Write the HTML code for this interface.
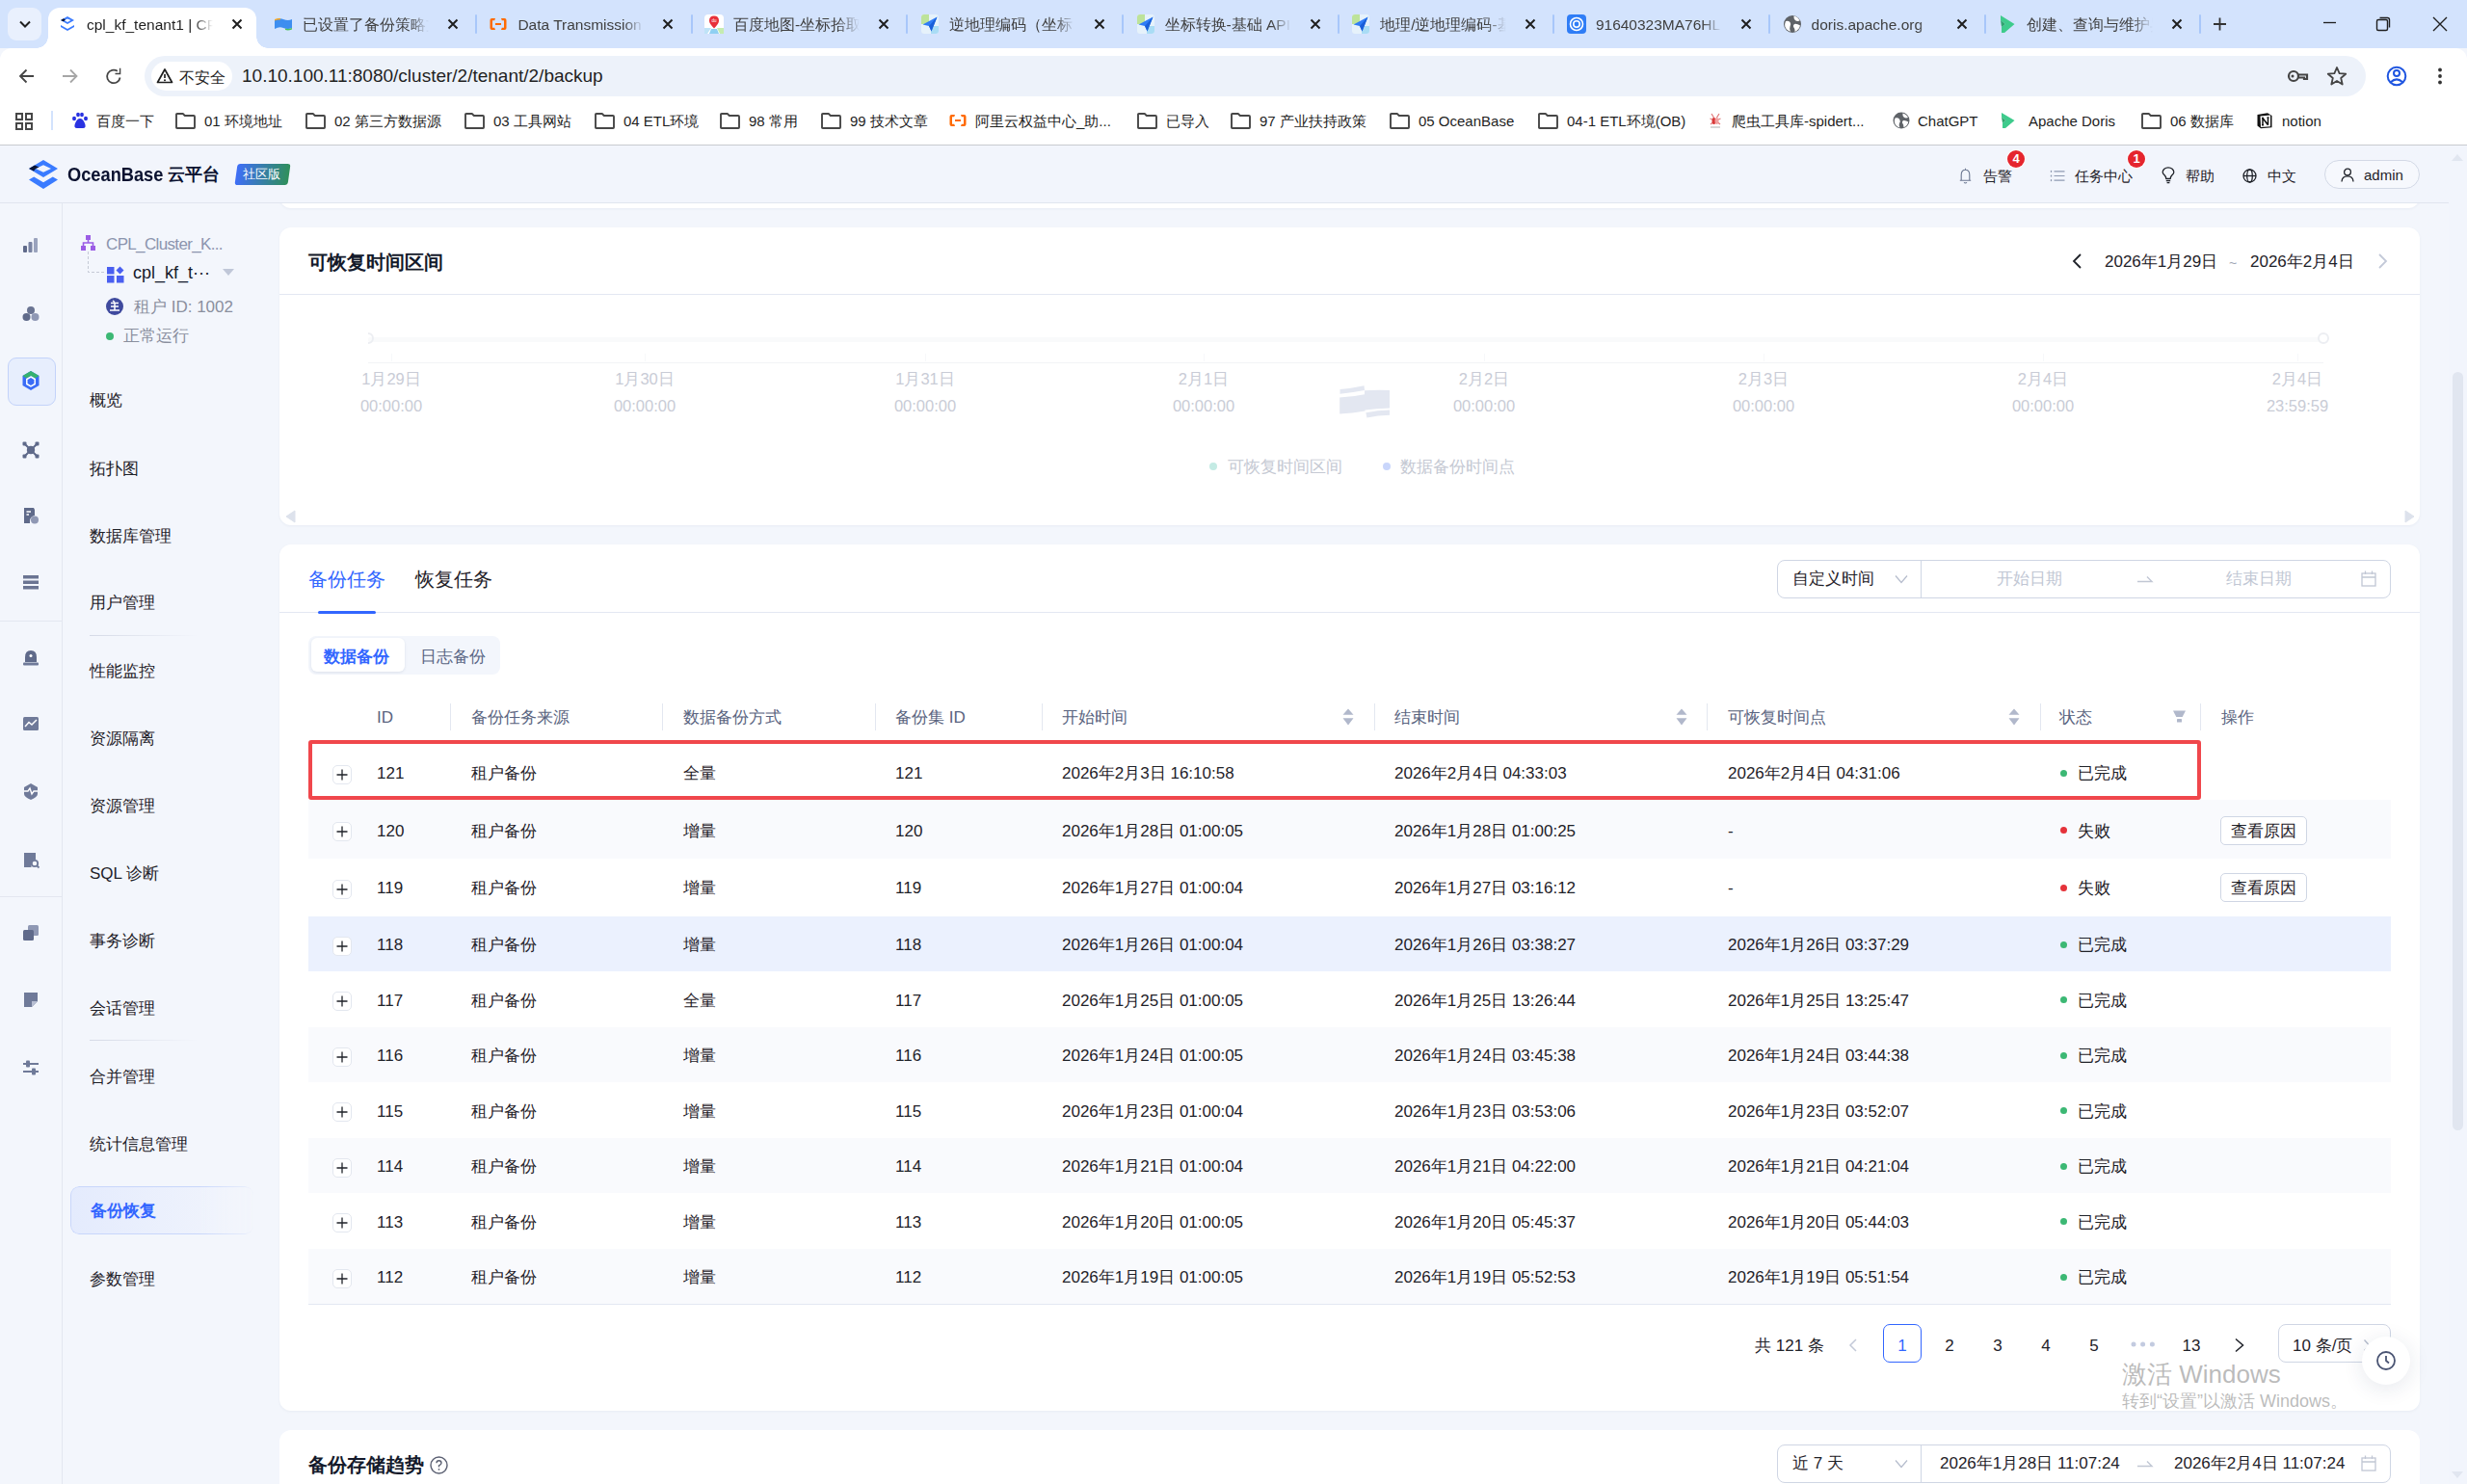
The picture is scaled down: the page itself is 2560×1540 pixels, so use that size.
<!DOCTYPE html><html><head><meta charset="utf-8"><style>
*{box-sizing:border-box;margin:0;padding:0}
html,body{width:2560px;height:1540px;overflow:hidden;background:#f3f6fc;font-family:"Liberation Sans",sans-serif;color:#1f1f1f;position:relative}
.a{position:absolute}
.t{position:absolute;white-space:nowrap;line-height:24px}
svg.i{position:absolute;overflow:visible}
.tab{position:absolute;top:8px;height:42px;width:224px}
.tab .fav{position:absolute;left:10px;top:7px;width:20px;height:20px}
.tab .ttl{position:absolute;left:40px;top:1px;width:131px;height:34px;overflow:hidden;font-size:15.5px;line-height:34px;color:#1f1f1f;white-space:nowrap;-webkit-mask-image:linear-gradient(to right,#000 84%,transparent)}
.tab .cls{position:absolute;left:186px;top:7px;width:20px;height:20px}
.sep{position:absolute;top:15px;width:2px;height:20px;background:#a8c7fa;border-radius:1px}
.bm{position:absolute;top:114px;height:24px;font-size:15px;line-height:24px;white-space:nowrap;color:#1f1f1f}
.mi{position:absolute;left:93px;font-size:17px;line-height:24px;color:#1f2229;white-space:nowrap}
.card{position:absolute;left:226px;width:2221px;background:#fff;border-radius:12px;box-shadow:0 1px 4px rgba(30,50,90,.05)}
.th{position:absolute;font-size:17px;line-height:24px;color:#5a6480;white-space:nowrap}
.td{position:absolute;font-size:17px;line-height:24px;color:#1f2229;white-space:nowrap}
.xl{position:absolute;color:#c9ccd6;font-size:16.5px;line-height:22px;white-space:nowrap;text-align:center;width:140px}
</style></head><body>
<div class="a" style="left:0;top:0;width:2560px;height:50px;background:#d3e3fd"></div>
<div class="a" style="left:8px;top:8px;width:35px;height:34px;border-radius:9px;background:#e9f0fd"></div>
<svg class="i" style="left:19px;top:19px" width="14" height="12" viewBox="0 0 14 12"><path d="M2 3.5 L7 8.5 L12 3.5" fill="none" stroke="#1f1f1f" stroke-width="2"/></svg>
<div class="a" style="left:50px;top:8px;width:216px;height:42px;background:#fff;border-radius:12px 12px 0 0"></div>
<div class="a" style="left:38px;top:38px;width:12px;height:12px;background:radial-gradient(circle at 0 0,transparent 11.5px,#fff 12px)"></div>
<div class="a" style="left:266px;top:38px;width:12px;height:12px;background:radial-gradient(circle at 100% 0,transparent 11.5px,#fff 12px)"></div>
<div class="tab" style="left:50.0px"><svg class="fav" viewBox="0 0 20 20"><path d="M10 2 L17 6 L10 10 L3 6 Z M10 4.5 L6.5 6 L10 8 L13.5 6 Z" fill="#3a7bff" fill-rule="evenodd"/><path d="M3 6 L6 4.3 L8 5.6 L5.8 7.2 Z" fill="#0b1533"/><path d="M3 11 L10 15 L17 11 L17 13 L10 17 L3 13 Z" fill="#3a7bff"/></svg><div class="ttl">cpl_kf_tenant1 | CP</div><svg class="cls" viewBox="0 0 20 20"><path d="M5.5 5.5 L14.5 14.5 M14.5 5.5 L5.5 14.5" stroke="#1f1f1f" stroke-width="2"/></svg></div>
<div class="tab" style="left:273.7px"><svg class="fav" viewBox="0 0 20 20"><path d="M1 6 Q6 3 10 5 Q15 7 19 5 L19 14 Q15 16 10 14 Q6 12 1 15 Z" fill="#3d8ef0"/><path d="M1 5 Q4 3.5 7 4 L7 5.5 Q4 5 1 6.5 Z" fill="#f5a623"/><path d="M12 14.5 Q15 15.5 19 14 L19 15.5 Q15 17 12 16 Z" fill="#4cc35b"/></svg><div class="ttl" style="color:#3f3f3f">已设置了备份策略文</div><svg class="cls" viewBox="0 0 20 20"><path d="M5.5 5.5 L14.5 14.5 M14.5 5.5 L5.5 14.5" stroke="#1f1f1f" stroke-width="2"/></svg></div>
<div class="sep" style="left:492.9px"></div>
<div class="tab" style="left:497.4px"><svg class="fav" viewBox="0 0 20 20"><path d="M7 4 H3.5 Q1.5 4 1.5 6 V14 Q1.5 16 3.5 16 H7 L6.2 13.8 H4 V6.2 H6.2 Z M13 4 H16.5 Q18.5 4 18.5 6 V14 Q18.5 16 16.5 16 H13 L13.8 13.8 H16 V6.2 H13.8 Z" fill="#ff6a00"/><rect x="7" y="9" width="6" height="2" fill="#ff6a00"/></svg><div class="ttl" style="color:#3f3f3f">Data Transmission</div><svg class="cls" viewBox="0 0 20 20"><path d="M5.5 5.5 L14.5 14.5 M14.5 5.5 L5.5 14.5" stroke="#1f1f1f" stroke-width="2"/></svg></div>
<div class="sep" style="left:716.6px"></div>
<div class="tab" style="left:721.1px"><svg class="fav" viewBox="0 0 20 20"><rect x="0" y="0" width="20" height="20" rx="4" fill="#fff"/><path d="M0 14 L7 14 L3 20 L0 20Z" fill="#bfe3f7"/><path d="M7 15 L13 15 L15 20 L5 20Z" fill="#8fd0f2"/><path d="M13 14 L20 14 L20 20 L16 20Z" fill="#c5ecb0"/><path d="M10 1.5 Q15 1.5 15 6.5 Q15 9.5 10 14.5 Q5 9.5 5 6.5 Q5 1.5 10 1.5Z" fill="#e8303a"/><text x="10" y="8.2" font-size="4.5" fill="#fff" text-anchor="middle" font-family="Liberation Sans">du</text></svg><div class="ttl" style="color:#3f3f3f">百度地图-坐标拾取器</div><svg class="cls" viewBox="0 0 20 20"><path d="M5.5 5.5 L14.5 14.5 M14.5 5.5 L5.5 14.5" stroke="#1f1f1f" stroke-width="2"/></svg></div>
<div class="sep" style="left:940.3px"></div>
<div class="tab" style="left:944.8px"><svg class="fav" viewBox="0 0 18 20"><rect x="0" y="0" width="18" height="20" rx="3" fill="#e6f2fb"/><path d="M0 3 Q0 0 3 0 L8 0 L8 10 L0 10Z" fill="#bde39a"/><path d="M10 12 L18 12 L18 17 Q18 20 15 20 L10 20Z" fill="#a9dcf5"/><path d="M1.5 10.5 L16.5 2.5 L10.5 17.5 L8 12 Z" fill="#2f7cf6"/><path d="M8 12 L16.5 2.5 L10.5 17.5Z" fill="#1a5fd8"/></svg><div class="ttl" style="color:#3f3f3f">逆地理编码（坐标 - 文</div><svg class="cls" viewBox="0 0 20 20"><path d="M5.5 5.5 L14.5 14.5 M14.5 5.5 L5.5 14.5" stroke="#1f1f1f" stroke-width="2"/></svg></div>
<div class="sep" style="left:1164.0px"></div>
<div class="tab" style="left:1168.5px"><svg class="fav" viewBox="0 0 18 20"><rect x="0" y="0" width="18" height="20" rx="3" fill="#e6f2fb"/><path d="M0 3 Q0 0 3 0 L8 0 L8 10 L0 10Z" fill="#bde39a"/><path d="M10 12 L18 12 L18 17 Q18 20 15 20 L10 20Z" fill="#a9dcf5"/><path d="M1.5 10.5 L16.5 2.5 L10.5 17.5 L8 12 Z" fill="#2f7cf6"/><path d="M8 12 L16.5 2.5 L10.5 17.5Z" fill="#1a5fd8"/></svg><div class="ttl" style="color:#3f3f3f">坐标转换-基础 API 文</div><svg class="cls" viewBox="0 0 20 20"><path d="M5.5 5.5 L14.5 14.5 M14.5 5.5 L5.5 14.5" stroke="#1f1f1f" stroke-width="2"/></svg></div>
<div class="sep" style="left:1387.7px"></div>
<div class="tab" style="left:1392.2px"><svg class="fav" viewBox="0 0 18 20"><rect x="0" y="0" width="18" height="20" rx="3" fill="#e6f2fb"/><path d="M0 3 Q0 0 3 0 L8 0 L8 10 L0 10Z" fill="#bde39a"/><path d="M10 12 L18 12 L18 17 Q18 20 15 20 L10 20Z" fill="#a9dcf5"/><path d="M1.5 10.5 L16.5 2.5 L10.5 17.5 L8 12 Z" fill="#2f7cf6"/><path d="M8 12 L16.5 2.5 L10.5 17.5Z" fill="#1a5fd8"/></svg><div class="ttl" style="color:#3f3f3f">地理/逆地理编码-基</div><svg class="cls" viewBox="0 0 20 20"><path d="M5.5 5.5 L14.5 14.5 M14.5 5.5 L5.5 14.5" stroke="#1f1f1f" stroke-width="2"/></svg></div>
<div class="sep" style="left:1611.4px"></div>
<div class="tab" style="left:1615.9px"><svg class="fav" viewBox="0 0 20 20"><rect x="0" y="0" width="20" height="20" rx="4" fill="#2f7df6"/><circle cx="10" cy="10" r="6.5" fill="none" stroke="#fff" stroke-width="1.6"/><circle cx="10" cy="10" r="3.2" fill="none" stroke="#fff" stroke-width="1.6"/></svg><div class="ttl" style="color:#3f3f3f">91640323MA76HL</div><svg class="cls" viewBox="0 0 20 20"><path d="M5.5 5.5 L14.5 14.5 M14.5 5.5 L5.5 14.5" stroke="#1f1f1f" stroke-width="2"/></svg></div>
<div class="sep" style="left:1835.1px"></div>
<div class="tab" style="left:1839.6px"><svg class="fav" viewBox="0 0 20 20"><circle cx="10" cy="10" r="9" fill="#5f6368"/><path d="M3 7 Q5.5 6 7.5 8 Q9 10 7.5 12.7 Q6.5 15 8 17.8 Q4 16.8 2.3 12.5 Q1.8 9.6 3 7Z M11.5 1.5 Q16 2.7 17.6 6.5 Q15 7.6 12.8 6 Q11 4.4 11.5 1.5Z M12 10 Q14.8 9.4 18 11.6 Q17 16 12.6 17.9 Q12.6 14.3 11 12.7 Q10.5 11 12 10Z" fill="#fff"/></svg><div class="ttl" style="color:#3f3f3f">doris.apache.org</div><svg class="cls" viewBox="0 0 20 20"><path d="M5.5 5.5 L14.5 14.5 M14.5 5.5 L5.5 14.5" stroke="#1f1f1f" stroke-width="2"/></svg></div>
<div class="sep" style="left:2058.8px"></div>
<div class="tab" style="left:2063.3px"><svg class="fav" viewBox="0 0 20 20"><path d="M3 1 L17.5 10 L7 19 L4 19 L4 13 L8 10 L3 6 Z" fill="#3ecb8c"/><path d="M3 6 L8 10 L4 13Z" fill="#2fa56f"/></svg><div class="ttl" style="color:#3f3f3f">创建、查询与维护异</div><svg class="cls" viewBox="0 0 20 20"><path d="M5.5 5.5 L14.5 14.5 M14.5 5.5 L5.5 14.5" stroke="#1f1f1f" stroke-width="2"/></svg></div>
<svg class="i" style="left:2293px;top:15px" width="20" height="20" viewBox="0 0 20 20"><path d="M10.5 3.5 V16.5 M4 10 H17" stroke="#333" stroke-width="1.8"/></svg>
<div class="sep" style="left:2282px"></div>
<svg class="i" style="left:2408px;top:14px" width="20" height="20" viewBox="0 0 20 20"><path d="M3 9.5 H16" stroke="#1f1f1f" stroke-width="1.3"/></svg>
<svg class="i" style="left:2463px;top:15px" width="20" height="20" viewBox="0 0 20 20"><rect x="3.5" y="5.5" width="11" height="11" rx="1.5" fill="none" stroke="#1f1f1f" stroke-width="1.4"/><path d="M6.5 3.5 H14.5 Q16.5 3.5 16.5 5.5 V13.5" fill="none" stroke="#1f1f1f" stroke-width="1.4"/></svg>
<svg class="i" style="left:2522px;top:15px" width="20" height="20" viewBox="0 0 20 20"><path d="M3 3 L17 17 M17 3 L3 17" stroke="#1f1f1f" stroke-width="1.4"/></svg>
<div class="a" style="left:0;top:50px;width:2560px;height:100px;background:#fff;border-radius:12px 12px 0 0"></div>
<svg class="i" style="left:18px;top:68.5px" width="20" height="20" viewBox="0 0 20 20"><path d="M17 10 H3 M9.5 3.5 L3 10 L9.5 16.5" fill="none" stroke="#454545" stroke-width="1.8"/></svg>
<svg class="i" style="left:63px;top:68.5px" width="20" height="20" viewBox="0 0 20 20"><path d="M2 10 H16.5 M10 3.5 L16.5 10 L10 16.5" fill="none" stroke="#a6a6a6" stroke-width="1.8"/></svg>
<svg class="i" style="left:108px;top:68.5px" width="20" height="20" viewBox="0 0 20 20"><path d="M16.6 11.5 A6.8 6.8 0 1 1 13.8 4.8" fill="none" stroke="#454545" stroke-width="1.8"/><path d="M17.3 1.8 V8.2 H11.5 V6.8 H15.9 V1.8Z" fill="#454545"/></svg>
<div class="a" style="left:150px;top:58px;width:2305px;height:42px;border-radius:21px;background:#edf2fa"></div>
<div class="a" style="left:157px;top:64px;width:84px;height:30px;border-radius:15px;background:#fff"></div>
<svg class="i" style="left:162px;top:70px" width="18" height="18" viewBox="0 0 18 18"><path d="M9 2 L16.5 15.5 H1.5 Z" fill="none" stroke="#1f1f1f" stroke-width="1.7" stroke-linejoin="round"/><path d="M9 7 V11" stroke="#1f1f1f" stroke-width="1.7"/><circle cx="9" cy="13.2" r="1" fill="#1f1f1f"/></svg>
<div class="t" style="left:186px;top:69px;font-size:15.5px;line-height:24px;color:#1f1f1f">不安全</div>
<div class="t" style="left:251px;top:66px;font-size:19px;line-height:26px;color:#1f1f1f">10.10.100.11:8080/cluster/2/tenant/2/backup</div>
<svg class="i" style="left:2373px;top:69px" width="24" height="20" viewBox="0 0 24 20"><circle cx="7" cy="10" r="5" fill="none" stroke="#444" stroke-width="2.2"/><circle cx="6" cy="10" r="1.5" fill="#444"/><path d="M12 8.5 H21 V13 H18 V11.5 H12" fill="none" stroke="#444" stroke-width="2.2"/></svg>
<svg class="i" style="left:2414px;top:68px" width="22" height="22" viewBox="0 0 22 22"><path d="M11 2 L13.6 8.2 L20.2 8.7 L15.2 13 L16.7 19.5 L11 16 L5.3 19.5 L6.8 13 L1.8 8.7 L8.4 8.2 Z" fill="none" stroke="#444" stroke-width="1.8" stroke-linejoin="round"/></svg>
<svg class="i" style="left:2476px;top:68px" width="22" height="22" viewBox="0 0 22 22"><circle cx="11" cy="11" r="9.3" fill="none" stroke="#1f55e0" stroke-width="2"/><circle cx="11" cy="8" r="3" fill="none" stroke="#1f55e0" stroke-width="2"/><path d="M4.8 17.2 Q11 11.5 17.2 17.2" fill="none" stroke="#1f55e0" stroke-width="2"/></svg>
<svg class="i" style="left:2527px;top:69px" width="10" height="20" viewBox="0 0 10 20"><circle cx="5" cy="3.5" r="1.9" fill="#333"/><circle cx="5" cy="10" r="1.9" fill="#333"/><circle cx="5" cy="16.5" r="1.9" fill="#333"/></svg>
<svg class="i" style="left:16px;top:117px" width="18" height="18" viewBox="0 0 18 18"><rect x="1" y="1" width="6" height="6" fill="none" stroke="#474747" stroke-width="2"/><rect x="11" y="1" width="6" height="6" fill="none" stroke="#474747" stroke-width="2"/><rect x="1" y="11" width="6" height="6" fill="none" stroke="#474747" stroke-width="2"/><rect x="11" y="11" width="6" height="6" fill="none" stroke="#474747" stroke-width="2"/></svg>
<div class="a" style="left:53px;top:115px;width:2px;height:20px;background:#d3e3fd"></div>
<svg class="i" style="left:74px;top:116px" width="18" height="18" viewBox="0 0 18 18"><ellipse cx="3" cy="7" rx="2" ry="2.3" fill="#2932e1"/><ellipse cx="7" cy="3" rx="1.9" ry="2.3" fill="#2932e1"/><ellipse cx="11" cy="3" rx="1.9" ry="2.3" fill="#2932e1"/><ellipse cx="15" cy="7" rx="2" ry="2.3" fill="#2932e1"/><path d="M9 7 Q12 7 14 12 Q16 17 12 17 H6 Q2 17 4 12 Q6 7 9 7Z" fill="#2932e1"/></svg>
<div class="bm" style="left:100px">百度一下</div>
<svg class="i" style="left:182px;top:117px" width="21" height="17" viewBox="0 0 21 17"><path d="M1 1.8 Q1 1 1.8 1 H7.8 L9.8 3 H19 Q20 3 20 4 V15.2 Q20 16 19.2 16 H1.8 Q1 16 1 15.2 Z" fill="none" stroke="#474747" stroke-width="1.9" stroke-linejoin="round"/></svg>
<div class="bm" style="left:212px">01 环境地址</div>
<svg class="i" style="left:317px;top:117px" width="21" height="17" viewBox="0 0 21 17"><path d="M1 1.8 Q1 1 1.8 1 H7.8 L9.8 3 H19 Q20 3 20 4 V15.2 Q20 16 19.2 16 H1.8 Q1 16 1 15.2 Z" fill="none" stroke="#474747" stroke-width="1.9" stroke-linejoin="round"/></svg>
<div class="bm" style="left:347px">02 第三方数据源</div>
<svg class="i" style="left:482px;top:117px" width="21" height="17" viewBox="0 0 21 17"><path d="M1 1.8 Q1 1 1.8 1 H7.8 L9.8 3 H19 Q20 3 20 4 V15.2 Q20 16 19.2 16 H1.8 Q1 16 1 15.2 Z" fill="none" stroke="#474747" stroke-width="1.9" stroke-linejoin="round"/></svg>
<div class="bm" style="left:512px">03 工具网站</div>
<svg class="i" style="left:617px;top:117px" width="21" height="17" viewBox="0 0 21 17"><path d="M1 1.8 Q1 1 1.8 1 H7.8 L9.8 3 H19 Q20 3 20 4 V15.2 Q20 16 19.2 16 H1.8 Q1 16 1 15.2 Z" fill="none" stroke="#474747" stroke-width="1.9" stroke-linejoin="round"/></svg>
<div class="bm" style="left:647px">04 ETL环境</div>
<svg class="i" style="left:747px;top:117px" width="21" height="17" viewBox="0 0 21 17"><path d="M1 1.8 Q1 1 1.8 1 H7.8 L9.8 3 H19 Q20 3 20 4 V15.2 Q20 16 19.2 16 H1.8 Q1 16 1 15.2 Z" fill="none" stroke="#474747" stroke-width="1.9" stroke-linejoin="round"/></svg>
<div class="bm" style="left:777px">98 常用</div>
<svg class="i" style="left:852px;top:117px" width="21" height="17" viewBox="0 0 21 17"><path d="M1 1.8 Q1 1 1.8 1 H7.8 L9.8 3 H19 Q20 3 20 4 V15.2 Q20 16 19.2 16 H1.8 Q1 16 1 15.2 Z" fill="none" stroke="#474747" stroke-width="1.9" stroke-linejoin="round"/></svg>
<div class="bm" style="left:882px">99 技术文章</div>
<svg class="i" style="left:984px;top:115px" width="20" height="20" viewBox="0 0 20 20"><path d="M7 4 H3.5 Q1.5 4 1.5 6 V14 Q1.5 16 3.5 16 H7 L6.2 13.8 H4 V6.2 H6.2 Z M13 4 H16.5 Q18.5 4 18.5 6 V14 Q18.5 16 16.5 16 H13 L13.8 13.8 H16 V6.2 H13.8 Z" fill="#ff6a00"/><rect x="7" y="9" width="6" height="2" fill="#ff6a00"/></svg>
<div class="bm" style="left:1012px">阿里云权益中心_助...</div>
<svg class="i" style="left:1180px;top:117px" width="21" height="17" viewBox="0 0 21 17"><path d="M1 1.8 Q1 1 1.8 1 H7.8 L9.8 3 H19 Q20 3 20 4 V15.2 Q20 16 19.2 16 H1.8 Q1 16 1 15.2 Z" fill="none" stroke="#474747" stroke-width="1.9" stroke-linejoin="round"/></svg>
<div class="bm" style="left:1210px">已导入</div>
<svg class="i" style="left:1277px;top:117px" width="21" height="17" viewBox="0 0 21 17"><path d="M1 1.8 Q1 1 1.8 1 H7.8 L9.8 3 H19 Q20 3 20 4 V15.2 Q20 16 19.2 16 H1.8 Q1 16 1 15.2 Z" fill="none" stroke="#474747" stroke-width="1.9" stroke-linejoin="round"/></svg>
<div class="bm" style="left:1307px">97 产业扶持政策</div>
<svg class="i" style="left:1442px;top:117px" width="21" height="17" viewBox="0 0 21 17"><path d="M1 1.8 Q1 1 1.8 1 H7.8 L9.8 3 H19 Q20 3 20 4 V15.2 Q20 16 19.2 16 H1.8 Q1 16 1 15.2 Z" fill="none" stroke="#474747" stroke-width="1.9" stroke-linejoin="round"/></svg>
<div class="bm" style="left:1472px">05 OceanBase</div>
<svg class="i" style="left:1596px;top:117px" width="21" height="17" viewBox="0 0 21 17"><path d="M1 1.8 Q1 1 1.8 1 H7.8 L9.8 3 H19 Q20 3 20 4 V15.2 Q20 16 19.2 16 H1.8 Q1 16 1 15.2 Z" fill="none" stroke="#474747" stroke-width="1.9" stroke-linejoin="round"/></svg>
<div class="bm" style="left:1626px">04-1 ETL环境(OB)</div>
<svg class="i" style="left:1773px;top:116px" width="14" height="18" viewBox="0 0 14 18"><path d="M3 2 L5.5 6 M11 2 L8.5 6 M1.5 7 L5 8.5 M12.5 7 L9 8.5 M2 13 L5 10.5 M12 13 L9 10.5" stroke="#e07a7a" stroke-width="1.2"/><ellipse cx="5.5" cy="9.5" rx="2" ry="3.5" fill="#d93838"/><ellipse cx="8.5" cy="9.5" rx="2" ry="3.5" fill="#f0a0a0"/><path d="M2 16 H12" stroke="#999" stroke-width="0.8"/></svg>
<div class="bm" style="left:1797px">爬虫工具库-spidert...</div>
<svg class="i" style="left:1964px;top:116px" width="18" height="18" viewBox="0 0 18 18"><circle cx="9" cy="9" r="8.5" fill="#5f6368"/><path d="M2.5 6.5 Q5 5.5 7 7.5 Q8.5 9.5 7 12 Q6 14 7.5 16.5 Q3.5 15.5 2 11.5 Q1.5 9 2.5 6.5Z M10.5 1.5 Q14.5 2.5 16 6 Q13.5 7 11.5 5.5 Q10 4 10.5 1.5Z M11 9 Q13.5 8.5 16.3 10.5 Q15.5 14.5 11.5 16.3 Q11.5 13 10 11.5 Q9.5 10 11 9Z" fill="#fff"/></svg>
<div class="bm" style="left:1990px">ChatGPT</div>
<svg class="i" style="left:2076px;top:116px" width="15" height="18" viewBox="0 0 15 18"><path d="M1 1 L14.5 9 L5 17 L2 17 L2 11.5 L5.5 9 L1 5.5 Z" fill="#3ecb8c"/><path d="M1 5.5 L5.5 9 L2 11.5Z" fill="#2fa56f"/></svg>
<div class="bm" style="left:2105px">Apache Doris</div>
<svg class="i" style="left:2222px;top:117px" width="21" height="17" viewBox="0 0 21 17"><path d="M1 1.8 Q1 1 1.8 1 H7.8 L9.8 3 H19 Q20 3 20 4 V15.2 Q20 16 19.2 16 H1.8 Q1 16 1 15.2 Z" fill="none" stroke="#474747" stroke-width="1.9" stroke-linejoin="round"/></svg>
<div class="bm" style="left:2252px">06 数据库</div>
<svg class="i" style="left:2341px;top:116px" width="18" height="18" viewBox="0 0 18 18"><path d="M1.5 3 L12 1.2 L16.5 4 V16.3 L5 17.3 L1.5 14.5Z" fill="#111"/><path d="M4.5 4.6 L15 3.6 V15.2 L5 16 Z" fill="#fff"/><path d="M7 6.5 V13.8 M7 6.5 L12.5 13.8 M12.5 6 V13.8 M6 6.5 H8 M11.5 6 H13.5 M6 13.8 H8" stroke="#111" stroke-width="1.5"/></svg>
<div class="bm" style="left:2368px">notion</div>
<div class="a" style="left:0;top:150px;width:2560px;height:1px;background:#c8cbd0"></div>
<div class="a" style="left:290px;top:196px;width:2221px;height:20px;background:#fff;border-radius:0 0 12px 12px;box-shadow:0 1px 3px rgba(30,50,90,.05)"></div>
<div class="a" style="left:0;top:151px;width:2541px;height:60px;background:#f2f5fc;border-bottom:1px solid #e0e5ef"></div>
<div class="a" style="left:2541px;top:151px;width:19px;height:1389px;background:#f2f5fc"></div>
<div class="a" style="left:2545px;top:386px;width:11px;height:787px;border-radius:6px;background:#e1e6f0"></div>
<svg class="i" style="left:2543px;top:158px" width="14" height="10" viewBox="0 0 14 10"><path d="M1 9 L7 2 L13 9Z" fill="#e1e6f0"/></svg>
<svg class="i" style="left:2543px;top:1526px" width="14" height="10" viewBox="0 0 14 10"><path d="M1 1 L7 8 L13 1Z" fill="#e1e6f0"/></svg>
<svg class="i" style="left:29px;top:165px" width="32" height="32" viewBox="0 0 32 32"><path d="M16 1 L31 10 L16 19 L1 10 Z M16 6.3 L24 10 L16 13.7 L8 10 Z" fill="#3a7bff" fill-rule="evenodd"/><path d="M1 10 L7 6.4 L11.5 8.6 L8 10 L6 12.4 Z" fill="#0b1533"/><path d="M1 21.5 L6.2 18.5 L16 24.3 L25.8 18.5 L31 21.5 L16 31 Z" fill="#3a7bff"/></svg>
<div class="t" style="left:70px;top:168.5px;font-size:20.5px;font-weight:bold;color:#0b1230;transform:scaleX(.89);transform-origin:0 50%">OceanBase</div>
<div class="t" style="left:174px;top:169px;font-size:18px;font-weight:bold;color:#0b1230">云平台</div>
<div class="a" style="left:245px;top:170px;width:55px;height:22px;transform:skewX(-8deg);border-radius:3px;background:linear-gradient(90deg,#3f6ef7,#2f8f5a)"></div>
<div class="t" style="left:252px;top:169px;font-size:13px;line-height:24px;color:#fff">社区版</div>
<svg class="i" style="left:2033px;top:174px" width="13" height="17" viewBox="0 0 13 17"><path d="M2.2 13 V7.5 Q2.2 2.3 6.5 2.3 Q10.8 2.3 10.8 7.5 V13 M0.8 13.3 H12.2 M6.5 0.8 V2.3 M5 15.3 Q6.5 16.6 8 15.3" fill="none" stroke="#6a7690" stroke-width="1.1"/></svg>
<div class="t" style="left:2058px;top:170.5px;font-size:15px;color:#1f2229">告警</div>
<div class="a" style="left:2083px;top:156px;width:18px;height:18px;border-radius:9px;background:#e5252e;color:#fff;font-size:13px;font-weight:bold;line-height:18px;text-align:center;box-shadow:0 0 0 1px #fff">4</div>
<svg class="i" style="left:2127px;top:176px" width="16" height="13" viewBox="0 0 16 13"><path d="M1.5 1.5 V2.3 M1.5 6.1 V6.9 M1.5 10.7 V11.5" stroke="#8f9ab2" stroke-width="1.4" stroke-linecap="round"/><path d="M4.5 1.9 H15.5 M4.5 6.5 H15.5 M4.5 11.1 H15.5" stroke="#8f9ab2" stroke-width="1.1"/></svg>
<div class="t" style="left:2153px;top:170.5px;font-size:15px;color:#1f2229">任务中心</div>
<div class="a" style="left:2208px;top:156px;width:18px;height:18px;border-radius:9px;background:#e5252e;color:#fff;font-size:13px;font-weight:bold;line-height:18px;text-align:center;box-shadow:0 0 0 1px #fff">1</div>
<svg class="i" style="left:2243px;top:174px" width="14" height="17" viewBox="0 0 14 17"><path d="M4.8 11.5 Q4.8 9.5 3.3 8 Q1.2 6 1.2 4.8 A5.8 5 0 0 1 12.8 4.8 Q12.8 6 10.7 8 Q9.2 9.5 9.2 11.5 Z" fill="none" stroke="#1f2229" stroke-width="1.3" stroke-linejoin="round"/><path d="M4.8 13.6 H9.2 M5.6 15.6 H8.4" stroke="#1f2229" stroke-width="1.3"/></svg>
<div class="t" style="left:2268px;top:170.5px;font-size:15px;color:#1f2229">帮助</div>
<svg class="i" style="left:2327px;top:175px" width="15" height="15" viewBox="0 0 15 15"><circle cx="7.5" cy="7.5" r="6.5" fill="none" stroke="#1f2229" stroke-width="1.3"/><ellipse cx="7.5" cy="7.5" rx="2.8" ry="6.5" fill="none" stroke="#1f2229" stroke-width="1.3"/><path d="M1 7.5 H14" stroke="#1f2229" stroke-width="1.3"/></svg>
<div class="t" style="left:2353px;top:170.5px;font-size:15px;color:#1f2229">中文</div>
<div class="a" style="left:2412px;top:166px;width:99px;height:30px;border-radius:15px;border:1px solid #d3d9e6;background:#f6f8fd"></div>
<svg class="i" style="left:2429px;top:174px" width="14" height="15" viewBox="0 0 14 15"><circle cx="7" cy="4.6" r="3.4" fill="none" stroke="#1f2229" stroke-width="1.3"/><path d="M1 14.5 Q1.3 8.8 7 8.8 Q12.7 8.8 13 14.5" fill="none" stroke="#1f2229" stroke-width="1.3"/></svg>
<div class="t" style="left:2453px;top:169.5px;font-size:15px;color:#1f2229">admin</div>
<div class="a" style="left:64px;top:211px;width:1px;height:1329px;background:#e3e7f0"></div>
<div class="a" style="left:0;top:644px;width:64px;height:1px;background:#e3e7f0"></div>
<div class="a" style="left:0;top:930px;width:64px;height:1px;background:#e3e7f0"></div>
<div class="a" style="left:8px;top:371px;width:50px;height:50px;border-radius:9px;background:#e7eefd;border:1px solid #c3d3fa"></div>
<svg class="i" style="left:23px;top:246px" width="18" height="18" viewBox="0 0 18 18"><rect x="1" y="9" width="4" height="7" rx="1" fill="#5f6a8a"/><rect x="6.5" y="5" width="4" height="11" rx="1" fill="#7a84a3"/><rect x="12" y="1" width="4" height="15" rx="1" fill="#9aa3bd"/></svg>
<svg class="i" style="left:23px;top:317px" width="18" height="18" viewBox="0 0 18 18"><circle cx="9" cy="5" r="4" fill="#6a7492"/><circle cx="4.5" cy="12" r="4" fill="#5f6a8a"/><circle cx="13.5" cy="12" r="4" fill="#8f98b4"/></svg>
<svg class="i" style="left:23px;top:386px" width="18" height="18" viewBox="0 0 18 18"><path d="M9 -1 L17.5 4 L17.5 14 L9 19 L0.5 14 L0.5 4Z" fill="#3b6cf6"/><path d="M9 -1 L17.5 4 L13.5 6.5 L9 4 L4.5 6.5 L0.5 4Z" fill="#36b26f"/><path d="M9 5 L13.2 7.5 L13.2 12.5 L9 15 L4.8 12.5 L4.8 7.5Z" fill="#3b6cf6" stroke="#fff" stroke-width="1.5"/></svg>
<svg class="i" style="left:23px;top:458px" width="18" height="18" viewBox="0 0 18 18"><circle cx="9" cy="9" r="4.2" fill="#5f6a8a"/><path d="M3 3 L15 15 M15 3 L3 15" stroke="#5f6a8a" stroke-width="2"/><rect x="0.5" y="0.5" width="4" height="4" rx="1" fill="#5f6a8a"/><rect x="13.5" y="0.5" width="4" height="4" rx="1" fill="#5f6a8a"/><rect x="0.5" y="13.5" width="4" height="4" rx="1" fill="#5f6a8a"/><rect x="13.5" y="13.5" width="4" height="4" rx="1" fill="#5f6a8a"/></svg>
<svg class="i" style="left:23px;top:526px" width="18" height="18" viewBox="0 0 18 18"><path d="M2 1 H12 L13 3 V9 Q8 10 8 15 V17 H2Z" fill="#5f6a8a"/><circle cx="13" cy="13.5" r="4" fill="#8f98b4"/><path d="M4.5 5 H9 M4.5 8 H7" stroke="#fff" stroke-width="1.4"/></svg>
<svg class="i" style="left:23px;top:595px" width="18" height="18" viewBox="0 0 18 18"><rect x="1" y="2" width="16" height="3.5" fill="#6a7492"/><rect x="1" y="7.5" width="16" height="3.5" fill="#6a7492"/><rect x="1" y="13" width="16" height="3.5" fill="#6a7492"/></svg>
<svg class="i" style="left:23px;top:673px" width="18" height="18" viewBox="0 0 18 18"><path d="M3 14 V9 Q3 2 9 2 Q15 2 15 9 V14Z" fill="#5f6a8a"/><rect x="1" y="14.5" width="16" height="3" rx="1" fill="#6f7a99"/><circle cx="9" cy="7.5" r="1.5" fill="#fff"/></svg>
<svg class="i" style="left:23px;top:742px" width="18" height="18" viewBox="0 0 18 18"><rect x="1" y="2" width="16" height="14" rx="1.5" fill="#6f7a99"/><path d="M3 12 L7 7.5 L10 10 L15 5" fill="none" stroke="#fff" stroke-width="1.5"/></svg>
<svg class="i" style="left:23px;top:812px" width="18" height="18" viewBox="0 0 18 18"><path d="M9 1 L16 5 V12 Q16 15 9 18 Q2 15 2 12 V5Z" fill="#6f7a99"/><path d="M2 9 H6 L8 6 L10 12 L12 9 H16" fill="none" stroke="#fff" stroke-width="1.4"/></svg>
<svg class="i" style="left:23px;top:883px" width="18" height="18" viewBox="0 0 18 18"><path d="M2 2 H14 V9 Q10 9.5 9.5 13 V17 H2Z" fill="#6f7a99"/><circle cx="13" cy="13" r="3.2" fill="none" stroke="#6f7a99" stroke-width="1.8"/><path d="M15.3 15.3 L17.5 17.5" stroke="#6f7a99" stroke-width="1.8"/></svg>
<svg class="i" style="left:23px;top:959px" width="18" height="18" viewBox="0 0 18 18"><rect x="6" y="1" width="11" height="11" rx="1.5" fill="#8f98b4"/><rect x="1" y="6" width="11" height="11" rx="1.5" fill="#5f6a8a"/></svg>
<svg class="i" style="left:23px;top:1028px" width="18" height="18" viewBox="0 0 18 18"><path d="M2 2 H16 V11 L10 17 H2Z" fill="#6f7a99"/><path d="M10 17 V11 H16" fill="#b8bfd3"/></svg>
<svg class="i" style="left:23px;top:1099px" width="18" height="18" viewBox="0 0 18 18"><path d="M1 5 H17 M1 13 H17" stroke="#6f7a99" stroke-width="2.2"/><rect x="4" y="1.5" width="4" height="7" rx="1" fill="#6f7a99"/><rect x="10" y="9.5" width="4" height="7" rx="1" fill="#6f7a99"/></svg>
<svg class="i" style="left:84px;top:244px" width="15" height="17" viewBox="0 0 15 17"><rect x="5" y="0" width="5" height="5" fill="#9b5de5"/><rect x="0" y="11" width="5" height="5" fill="#9b5de5"/><rect x="10" y="11" width="5" height="5" fill="#9b5de5"/><path d="M7.5 5 V8 M2.5 11 V8 H12.5 V11" fill="none" stroke="#9b5de5" stroke-width="1.6"/></svg>
<div class="t" style="left:110px;top:241.5px;font-size:17px;color:#8b94ae;letter-spacing:-0.65px">CPL_Cluster_K...</div>
<svg class="i" style="left:91px;top:261px" width="20" height="24" viewBox="0 0 20 24"><path d="M0.5 0 V21.5 H19" fill="none" stroke="#c5cad6" stroke-width="1" stroke-dasharray="3 2"/></svg>
<svg class="i" style="left:111px;top:276px" width="18" height="18" viewBox="0 0 18 18"><rect x="0" y="1" width="7.5" height="7.5" fill="#4a5ff0"/><path d="M13.5 0.5 L17.5 4.5 L13.5 8.5 L9.5 4.5Z" fill="#4a5ff0"/><rect x="0" y="10" width="7.5" height="7.5" fill="#4a5ff0"/><rect x="10" y="10" width="7.5" height="7.5" fill="#4a5ff0"/></svg>
<div class="t" style="left:138px;top:271px;font-size:18px;color:#141a2b">cpl_kf_t···</div>
<svg class="i" style="left:231px;top:279px" width="12" height="8" viewBox="0 0 12 8"><path d="M0 0 H12 L6 7Z" fill="#c0c7d8"/></svg>
<svg class="i" style="left:110px;top:309px" width="18" height="18" viewBox="0 0 18 18"><circle cx="9" cy="9" r="9" fill="#3f4a9e"/><path d="M5 5.5 H13 M5 9 H13 M4 13 H14 M9 5.5 V13 M7 3 L9 4.5" stroke="#fff" stroke-width="1.5"/></svg>
<div class="t" style="left:139px;top:307px;font-size:17px;color:#8a8f9e">租户 ID: 1002</div>
<div class="a" style="left:110px;top:345px;width:8px;height:8px;border-radius:4px;background:#3cb874"></div>
<div class="t" style="left:128px;top:337px;font-size:17px;color:#8a8f9e">正常运行</div>
<div class="a" style="left:93px;top:659px;width:112px;height:1px;background:linear-gradient(90deg,#d5dae6,rgba(213,218,230,0))"></div>
<div class="a" style="left:93px;top:1079px;width:112px;height:1px;background:linear-gradient(90deg,#d5dae6,rgba(213,218,230,0))"></div>
<div class="a" style="left:73px;top:1231px;width:190px;height:50px;border-radius:9px;background:linear-gradient(90deg,#e4ebfd,#f2f5fc);border:1px solid #c8d6fb;border-right:none;-webkit-mask-image:linear-gradient(90deg,#000 70%,rgba(0,0,0,.2))"></div>
<div class="mi" style="top:403.5px">概览</div>
<div class="mi" style="top:474.5px">拓扑图</div>
<div class="mi" style="top:544.5px">数据库管理</div>
<div class="mi" style="top:613.5px">用户管理</div>
<div class="mi" style="top:684.5px">性能监控</div>
<div class="mi" style="top:754.5px">资源隔离</div>
<div class="mi" style="top:824.5px">资源管理</div>
<div class="mi" style="top:894.5px">SQL 诊断</div>
<div class="mi" style="top:964.5px">事务诊断</div>
<div class="mi" style="top:1034.5px">会话管理</div>
<div class="mi" style="top:1105.5px">合并管理</div>
<div class="mi" style="top:1175.5px">统计信息管理</div>
<div class="mi" style="top:1245.0px;left:94px;color:#3266ff;font-weight:bold">备份恢复</div>
<div class="mi" style="top:1315.5px">参数管理</div>
<div class="a" style="left:290px;top:236px;width:2221px;height:309px;background:#fff;border-radius:12px;box-shadow:0 1px 3px rgba(30,50,90,.05)"></div>
<div class="t" style="left:320px;top:259px;font-size:20px;line-height:26px;font-weight:bold;color:#141a2b">可恢复时间区间</div>
<div class="a" style="left:290px;top:305px;width:2221px;height:1px;background:#e3e8f2"></div>
<svg class="i" style="left:2149px;top:262px" width="12" height="18" viewBox="0 0 12 18"><path d="M10 2 L3 9 L10 16" fill="none" stroke="#1f2229" stroke-width="1.8"/></svg>
<div class="t" style="left:2184px;top:260px;font-size:17px;color:#1f2229">2026年1月29日</div>
<div class="t" style="left:2313px;top:261px;font-size:14px;color:#a0a6b4">~</div>
<div class="t" style="left:2335px;top:260px;font-size:17px;color:#1f2229">2026年2月4日</div>
<svg class="i" style="left:2467px;top:262px" width="12" height="18" viewBox="0 0 12 18"><path d="M2 2 L9 9 L2 16" fill="none" stroke="#c3c9d8" stroke-width="1.8"/></svg>
<div class="a" style="left:382px;top:350px;width:2029px;height:5px;background:#f9fafb;border-radius:2px"></div>
<svg class="i" style="left:376px;top:345px" width="12" height="12" viewBox="0 0 12 12"><path d="M6 1 A5 5 0 0 1 6 11" fill="none" stroke="#eceef2" stroke-width="2"/></svg>
<div class="a" style="left:2405px;top:345px;width:12px;height:12px;border-radius:6px;border:2px solid #eceef2;background:#fff"></div>
<div class="a" style="left:382px;top:376px;width:2029px;height:1px;background:#f2f3f6"></div>
<div class="a" style="left:406px;top:367px;width:1px;height:8px;background:#f7f8fa"></div>
<div class="xl" style="left:336px;top:382px">1月29日</div>
<div class="xl" style="left:336px;top:410px">00:00:00</div>
<div class="a" style="left:669px;top:367px;width:1px;height:8px;background:#f7f8fa"></div>
<div class="xl" style="left:599px;top:382px">1月30日</div>
<div class="xl" style="left:599px;top:410px">00:00:00</div>
<div class="a" style="left:960px;top:367px;width:1px;height:8px;background:#f7f8fa"></div>
<div class="xl" style="left:890px;top:382px">1月31日</div>
<div class="xl" style="left:890px;top:410px">00:00:00</div>
<div class="a" style="left:1249px;top:367px;width:1px;height:8px;background:#f7f8fa"></div>
<div class="xl" style="left:1179px;top:382px">2月1日</div>
<div class="xl" style="left:1179px;top:410px">00:00:00</div>
<div class="a" style="left:1540px;top:367px;width:1px;height:8px;background:#f7f8fa"></div>
<div class="xl" style="left:1470px;top:382px">2月2日</div>
<div class="xl" style="left:1470px;top:410px">00:00:00</div>
<div class="a" style="left:1830px;top:367px;width:1px;height:8px;background:#f7f8fa"></div>
<div class="xl" style="left:1760px;top:382px">2月3日</div>
<div class="xl" style="left:1760px;top:410px">00:00:00</div>
<div class="a" style="left:2120px;top:367px;width:1px;height:8px;background:#f7f8fa"></div>
<div class="xl" style="left:2050px;top:382px">2月4日</div>
<div class="xl" style="left:2050px;top:410px">00:00:00</div>
<div class="a" style="left:2384px;top:367px;width:1px;height:8px;background:#f7f8fa"></div>
<div class="xl" style="left:2314px;top:382px">2月4日</div>
<div class="xl" style="left:2314px;top:410px">23:59:59</div>
<svg class="i" style="left:1390px;top:400px" width="52" height="34" viewBox="0 0 52 34"><path d="M0.5 4 Q13 3 25.5 0.3 L26 5 Q13 7.5 0.5 8.8 Z" fill="#e3e7f1"/><path d="M0.2 12.4 Q13 12 26 9.2 L26 5.2 Q38 4.6 52 5 V23.4 Q38 23.8 26.5 25.6 L26.5 26.6 Q13 29 0.2 29.4 Z" fill="#e3e7f1"/><path d="M27.4 28.2 Q40 25.6 52 25.4 V30.7 Q40 31 28.4 33.4 Z" fill="#e3e7f1"/></svg>
<div class="a" style="left:1255px;top:480px;width:8px;height:8px;border-radius:4px;background:#c4ebe4"></div>
<div class="t" style="left:1274px;top:473px;font-size:17px;color:#c5c9d3">可恢复时间区间</div>
<div class="a" style="left:1435px;top:480px;width:8px;height:8px;border-radius:4px;background:#c9d6fb"></div>
<div class="t" style="left:1453px;top:473px;font-size:17px;color:#c5c9d3">数据备份时间点</div>
<svg class="i" style="left:296px;top:529px" width="11" height="14" viewBox="0 0 11 14"><path d="M10 1 L1 7 L10 13Z" fill="#dde2ec" stroke="#dde2ec" stroke-width="1" stroke-linejoin="round"/></svg>
<svg class="i" style="left:2495px;top:529px" width="11" height="14" viewBox="0 0 11 14"><path d="M1 1 L10 7 L1 13Z" fill="#dde2ec" stroke="#dde2ec" stroke-width="1" stroke-linejoin="round"/></svg>
<div class="a" style="left:290px;top:565px;width:2221px;height:899px;background:#fff;border-radius:12px;box-shadow:0 1px 3px rgba(30,50,90,.05)"></div>
<div class="t" style="left:320px;top:588px;font-size:20px;line-height:26px;color:#3266ff">备份任务</div>
<div class="t" style="left:431px;top:588px;font-size:20px;line-height:26px;color:#1f2229">恢复任务</div>
<div class="a" style="left:290px;top:635px;width:2221px;height:1px;background:#e3e8f2"></div>
<div class="a" style="left:330px;top:634px;width:60px;height:3px;border-radius:2px;background:#3266ff"></div>
<div class="a" style="left:1844px;top:581px;width:637px;height:40px;border:1px solid #cfd6e4;border-radius:8px;background:#fff"></div>
<div class="a" style="left:1993px;top:582px;width:1px;height:38px;background:#cfd6e4"></div>
<div class="t" style="left:1860px;top:589px;font-size:17px;color:#1f2229">自定义时间</div>
<svg class="i" style="left:1966px;top:596px" width="14" height="10" viewBox="0 0 14 10"><path d="M1 1.5 L7 8.5 L13 1.5" fill="none" stroke="#b5bccc" stroke-width="1.2"/></svg>
<div class="t" style="left:2072px;top:589px;font-size:17px;color:#c1c7d4">开始日期</div>
<div class="t" style="left:2310px;top:589px;font-size:17px;color:#c1c7d4">结束日期</div>
<svg class="i" style="left:2218px;top:597px" width="16" height="8" viewBox="0 0 16 8"><path d="M0 6.5 H15 L10 1.5" fill="none" stroke="#c1c7d4" stroke-width="1.4"/></svg>
<svg class="i" style="left:2450px;top:592px" width="16" height="17" viewBox="0 0 16 17"><rect x="1" y="3" width="14" height="13" fill="none" stroke="#c1c7d4" stroke-width="1.3"/><path d="M1 7 H15 M4.5 0.5 V4 M11.5 0.5 V4" stroke="#c1c7d4" stroke-width="1.3"/></svg>
<div class="a" style="left:320px;top:660px;width:199px;height:40px;border-radius:8px;background:#f3f6fc"></div>
<div class="a" style="left:323px;top:662px;width:97px;height:35px;border-radius:6px;background:#fff;box-shadow:0 1px 3px rgba(20,40,80,.1)"></div>
<div class="t" style="left:336px;top:669px;font-size:17.3px;font-weight:bold;color:#3266ff">数据备份</div>
<div class="t" style="left:436px;top:669px;font-size:17.3px;color:#5a6685">日志备份</div>
<div class="th" style="left:391px;top:733px">ID</div>
<div class="th" style="left:489px;top:733px">备份任务来源</div>
<div class="th" style="left:709px;top:733px">数据备份方式</div>
<div class="th" style="left:929px;top:733px">备份集 ID</div>
<div class="th" style="left:1102px;top:733px">开始时间</div>
<div class="th" style="left:1447px;top:733px">结束时间</div>
<div class="th" style="left:1793px;top:733px">可恢复时间点</div>
<div class="th" style="left:2137px;top:733px">状态</div>
<div class="th" style="left:2305px;top:733px">操作</div>
<div class="a" style="left:467px;top:730px;width:1px;height:28px;background:#e3e7f0"></div>
<div class="a" style="left:687px;top:730px;width:1px;height:28px;background:#e3e7f0"></div>
<div class="a" style="left:908px;top:730px;width:1px;height:28px;background:#e3e7f0"></div>
<div class="a" style="left:1081px;top:730px;width:1px;height:28px;background:#e3e7f0"></div>
<div class="a" style="left:1426px;top:730px;width:1px;height:28px;background:#e3e7f0"></div>
<div class="a" style="left:1771px;top:730px;width:1px;height:28px;background:#e3e7f0"></div>
<div class="a" style="left:2117px;top:730px;width:1px;height:28px;background:#e3e7f0"></div>
<div class="a" style="left:2283px;top:730px;width:1px;height:28px;background:#e3e7f0"></div>
<svg class="i" style="left:1393px;top:734.5px" width="12" height="19" viewBox="0 0 12 19"><path d="M6 0.5 L11.5 6.8 H0.5Z M6 17.5 L11.5 10.2 H0.5Z" fill="#b1b8cb"/></svg>
<svg class="i" style="left:1739px;top:734.5px" width="12" height="19" viewBox="0 0 12 19"><path d="M6 0.5 L11.5 6.8 H0.5Z M6 17.5 L11.5 10.2 H0.5Z" fill="#b1b8cb"/></svg>
<svg class="i" style="left:2084px;top:734.5px" width="12" height="19" viewBox="0 0 12 19"><path d="M6 0.5 L11.5 6.8 H0.5Z M6 17.5 L11.5 10.2 H0.5Z" fill="#b1b8cb"/></svg>
<svg class="i" style="left:2254px;top:736px" width="15" height="15" viewBox="0 0 15 15"><path d="M1 1.5 H14 L10.7 8 H4.3 Z" fill="#b1b8cb"/><rect x="5" y="10" width="5" height="3.5" rx="0.6" fill="#b1b8cb"/></svg>
<div class="a" style="left:320px;top:771px;width:2161px;height:1px;background:#e3e8f2"></div>
<div class="a" style="left:320px;top:770px;width:2161px;height:60px;background:#fff"></div>
<div class="a" style="left:345px;top:793.9px;width:20px;height:20px;border:1px solid #e3e7ef;border-radius:5px;background:#fff"></div>
<svg class="i" style="left:349px;top:797.9px" width="12" height="12" viewBox="0 0 12 12"><path d="M6 0.5 V11.5 M0.5 6 H11.5" stroke="#1f2229" stroke-width="1.3"/></svg>
<div class="td" style="left:391px;top:791.4px">121</div>
<div class="td" style="left:489px;top:791.4px">租户备份</div>
<div class="td" style="left:709px;top:791.4px">全量</div>
<div class="td" style="left:929px;top:791.4px">121</div>
<div class="td" style="left:1102px;top:791.4px">2026年2月3日 16:10:58</div>
<div class="td" style="left:1447px;top:791.4px">2026年2月4日 04:33:03</div>
<div class="td" style="left:1793px;top:791.4px">2026年2月4日 04:31:06</div>
<div class="a" style="left:2138px;top:798.9px;width:7px;height:7px;border-radius:4px;background:#3cb874"></div>
<div class="td" style="left:2156px;top:791.4px">已完成</div>
<div class="a" style="left:320px;top:830px;width:2161px;height:61px;background:#f9fafd"></div>
<div class="a" style="left:345px;top:853.0px;width:20px;height:20px;border:1px solid #e3e7ef;border-radius:5px;background:#fff"></div>
<svg class="i" style="left:349px;top:857.0px" width="12" height="12" viewBox="0 0 12 12"><path d="M6 0.5 V11.5 M0.5 6 H11.5" stroke="#1f2229" stroke-width="1.3"/></svg>
<div class="td" style="left:391px;top:850.5px">120</div>
<div class="td" style="left:489px;top:850.5px">租户备份</div>
<div class="td" style="left:709px;top:850.5px">增量</div>
<div class="td" style="left:929px;top:850.5px">120</div>
<div class="td" style="left:1102px;top:850.5px">2026年1月28日 01:00:05</div>
<div class="td" style="left:1447px;top:850.5px">2026年1月28日 01:00:25</div>
<div class="td" style="left:1793px;top:850.5px">-</div>
<div class="a" style="left:2138px;top:858.0px;width:7px;height:7px;border-radius:4px;background:#e5323a"></div>
<div class="td" style="left:2156px;top:850.5px">失败</div>
<div class="a" style="left:2304px;top:846.5px;width:90px;height:30px;border:1px solid #cfd6e4;border-radius:5px;background:#fff"></div>
<div class="td" style="left:2315px;top:850.5px;font-size:17px">查看原因</div>
<div class="a" style="left:320px;top:891px;width:2161px;height:60px;background:#fff"></div>
<div class="a" style="left:345px;top:912.5px;width:20px;height:20px;border:1px solid #e3e7ef;border-radius:5px;background:#fff"></div>
<svg class="i" style="left:349px;top:916.5px" width="12" height="12" viewBox="0 0 12 12"><path d="M6 0.5 V11.5 M0.5 6 H11.5" stroke="#1f2229" stroke-width="1.3"/></svg>
<div class="td" style="left:391px;top:910.0px">119</div>
<div class="td" style="left:489px;top:910.0px">租户备份</div>
<div class="td" style="left:709px;top:910.0px">增量</div>
<div class="td" style="left:929px;top:910.0px">119</div>
<div class="td" style="left:1102px;top:910.0px">2026年1月27日 01:00:04</div>
<div class="td" style="left:1447px;top:910.0px">2026年1月27日 03:16:12</div>
<div class="td" style="left:1793px;top:910.0px">-</div>
<div class="a" style="left:2138px;top:917.5px;width:7px;height:7px;border-radius:4px;background:#e5323a"></div>
<div class="td" style="left:2156px;top:910.0px">失败</div>
<div class="a" style="left:2304px;top:906.0px;width:90px;height:30px;border:1px solid #cfd6e4;border-radius:5px;background:#fff"></div>
<div class="td" style="left:2315px;top:910.0px;font-size:17px">查看原因</div>
<div class="a" style="left:320px;top:951px;width:2161px;height:57px;background:#ebf1fe"></div>
<div class="a" style="left:345px;top:971.8px;width:20px;height:20px;border:1px solid #e3e7ef;border-radius:5px;background:#fff"></div>
<svg class="i" style="left:349px;top:975.8px" width="12" height="12" viewBox="0 0 12 12"><path d="M6 0.5 V11.5 M0.5 6 H11.5" stroke="#1f2229" stroke-width="1.3"/></svg>
<div class="td" style="left:391px;top:969.3px">118</div>
<div class="td" style="left:489px;top:969.3px">租户备份</div>
<div class="td" style="left:709px;top:969.3px">增量</div>
<div class="td" style="left:929px;top:969.3px">118</div>
<div class="td" style="left:1102px;top:969.3px">2026年1月26日 01:00:04</div>
<div class="td" style="left:1447px;top:969.3px">2026年1月26日 03:38:27</div>
<div class="td" style="left:1793px;top:969.3px">2026年1月26日 03:37:29</div>
<div class="a" style="left:2138px;top:976.8px;width:7px;height:7px;border-radius:4px;background:#3cb874"></div>
<div class="td" style="left:2156px;top:969.3px">已完成</div>
<div class="a" style="left:320px;top:1008px;width:2161px;height:58px;background:#fff"></div>
<div class="a" style="left:345px;top:1029.3px;width:20px;height:20px;border:1px solid #e3e7ef;border-radius:5px;background:#fff"></div>
<svg class="i" style="left:349px;top:1033.3px" width="12" height="12" viewBox="0 0 12 12"><path d="M6 0.5 V11.5 M0.5 6 H11.5" stroke="#1f2229" stroke-width="1.3"/></svg>
<div class="td" style="left:391px;top:1026.8px">117</div>
<div class="td" style="left:489px;top:1026.8px">租户备份</div>
<div class="td" style="left:709px;top:1026.8px">全量</div>
<div class="td" style="left:929px;top:1026.8px">117</div>
<div class="td" style="left:1102px;top:1026.8px">2026年1月25日 01:00:05</div>
<div class="td" style="left:1447px;top:1026.8px">2026年1月25日 13:26:44</div>
<div class="td" style="left:1793px;top:1026.8px">2026年1月25日 13:25:47</div>
<div class="a" style="left:2138px;top:1034.3px;width:7px;height:7px;border-radius:4px;background:#3cb874"></div>
<div class="td" style="left:2156px;top:1026.8px">已完成</div>
<div class="a" style="left:320px;top:1066px;width:2161px;height:57px;background:#f9fafd"></div>
<div class="a" style="left:345px;top:1086.8px;width:20px;height:20px;border:1px solid #e3e7ef;border-radius:5px;background:#fff"></div>
<svg class="i" style="left:349px;top:1090.8px" width="12" height="12" viewBox="0 0 12 12"><path d="M6 0.5 V11.5 M0.5 6 H11.5" stroke="#1f2229" stroke-width="1.3"/></svg>
<div class="td" style="left:391px;top:1084.3px">116</div>
<div class="td" style="left:489px;top:1084.3px">租户备份</div>
<div class="td" style="left:709px;top:1084.3px">增量</div>
<div class="td" style="left:929px;top:1084.3px">116</div>
<div class="td" style="left:1102px;top:1084.3px">2026年1月24日 01:00:05</div>
<div class="td" style="left:1447px;top:1084.3px">2026年1月24日 03:45:38</div>
<div class="td" style="left:1793px;top:1084.3px">2026年1月24日 03:44:38</div>
<div class="a" style="left:2138px;top:1091.8px;width:7px;height:7px;border-radius:4px;background:#3cb874"></div>
<div class="td" style="left:2156px;top:1084.3px">已完成</div>
<div class="a" style="left:320px;top:1123px;width:2161px;height:58px;background:#fff"></div>
<div class="a" style="left:345px;top:1144.3px;width:20px;height:20px;border:1px solid #e3e7ef;border-radius:5px;background:#fff"></div>
<svg class="i" style="left:349px;top:1148.3px" width="12" height="12" viewBox="0 0 12 12"><path d="M6 0.5 V11.5 M0.5 6 H11.5" stroke="#1f2229" stroke-width="1.3"/></svg>
<div class="td" style="left:391px;top:1141.8px">115</div>
<div class="td" style="left:489px;top:1141.8px">租户备份</div>
<div class="td" style="left:709px;top:1141.8px">增量</div>
<div class="td" style="left:929px;top:1141.8px">115</div>
<div class="td" style="left:1102px;top:1141.8px">2026年1月23日 01:00:04</div>
<div class="td" style="left:1447px;top:1141.8px">2026年1月23日 03:53:06</div>
<div class="td" style="left:1793px;top:1141.8px">2026年1月23日 03:52:07</div>
<div class="a" style="left:2138px;top:1149.3px;width:7px;height:7px;border-radius:4px;background:#3cb874"></div>
<div class="td" style="left:2156px;top:1141.8px">已完成</div>
<div class="a" style="left:320px;top:1181px;width:2161px;height:57px;background:#f9fafd"></div>
<div class="a" style="left:345px;top:1201.8px;width:20px;height:20px;border:1px solid #e3e7ef;border-radius:5px;background:#fff"></div>
<svg class="i" style="left:349px;top:1205.8px" width="12" height="12" viewBox="0 0 12 12"><path d="M6 0.5 V11.5 M0.5 6 H11.5" stroke="#1f2229" stroke-width="1.3"/></svg>
<div class="td" style="left:391px;top:1199.3px">114</div>
<div class="td" style="left:489px;top:1199.3px">租户备份</div>
<div class="td" style="left:709px;top:1199.3px">增量</div>
<div class="td" style="left:929px;top:1199.3px">114</div>
<div class="td" style="left:1102px;top:1199.3px">2026年1月21日 01:00:04</div>
<div class="td" style="left:1447px;top:1199.3px">2026年1月21日 04:22:00</div>
<div class="td" style="left:1793px;top:1199.3px">2026年1月21日 04:21:04</div>
<div class="a" style="left:2138px;top:1206.8px;width:7px;height:7px;border-radius:4px;background:#3cb874"></div>
<div class="td" style="left:2156px;top:1199.3px">已完成</div>
<div class="a" style="left:320px;top:1238px;width:2161px;height:58px;background:#fff"></div>
<div class="a" style="left:345px;top:1259.3px;width:20px;height:20px;border:1px solid #e3e7ef;border-radius:5px;background:#fff"></div>
<svg class="i" style="left:349px;top:1263.3px" width="12" height="12" viewBox="0 0 12 12"><path d="M6 0.5 V11.5 M0.5 6 H11.5" stroke="#1f2229" stroke-width="1.3"/></svg>
<div class="td" style="left:391px;top:1256.8px">113</div>
<div class="td" style="left:489px;top:1256.8px">租户备份</div>
<div class="td" style="left:709px;top:1256.8px">增量</div>
<div class="td" style="left:929px;top:1256.8px">113</div>
<div class="td" style="left:1102px;top:1256.8px">2026年1月20日 01:00:05</div>
<div class="td" style="left:1447px;top:1256.8px">2026年1月20日 05:45:37</div>
<div class="td" style="left:1793px;top:1256.8px">2026年1月20日 05:44:03</div>
<div class="a" style="left:2138px;top:1264.3px;width:7px;height:7px;border-radius:4px;background:#3cb874"></div>
<div class="td" style="left:2156px;top:1256.8px">已完成</div>
<div class="a" style="left:320px;top:1296px;width:2161px;height:57px;background:#f9fafd"></div>
<div class="a" style="left:345px;top:1316.8px;width:20px;height:20px;border:1px solid #e3e7ef;border-radius:5px;background:#fff"></div>
<svg class="i" style="left:349px;top:1320.8px" width="12" height="12" viewBox="0 0 12 12"><path d="M6 0.5 V11.5 M0.5 6 H11.5" stroke="#1f2229" stroke-width="1.3"/></svg>
<div class="td" style="left:391px;top:1314.3px">112</div>
<div class="td" style="left:489px;top:1314.3px">租户备份</div>
<div class="td" style="left:709px;top:1314.3px">增量</div>
<div class="td" style="left:929px;top:1314.3px">112</div>
<div class="td" style="left:1102px;top:1314.3px">2026年1月19日 01:00:05</div>
<div class="td" style="left:1447px;top:1314.3px">2026年1月19日 05:52:53</div>
<div class="td" style="left:1793px;top:1314.3px">2026年1月19日 05:51:54</div>
<div class="a" style="left:2138px;top:1321.8px;width:7px;height:7px;border-radius:4px;background:#3cb874"></div>
<div class="td" style="left:2156px;top:1314.3px">已完成</div>
<div class="a" style="left:320px;top:1353px;width:2161px;height:1px;background:#e3e8f2"></div>
<div class="a" style="left:320px;top:768px;width:1964px;height:62px;border:4px solid #f0474c;border-radius:3px"></div>
<div class="t" style="left:1821px;top:1385.0px;font-size:17px;color:#1f2229">共 121 条</div>
<svg class="i" style="left:1918px;top:1387.5px" width="10" height="16" viewBox="0 0 10 16"><path d="M8 2 L2 8 L8 14" fill="none" stroke="#c3c9d8" stroke-width="1.5"/></svg>
<div class="a" style="left:1954px;top:1374px;width:40px;height:40px;border:1px solid #3266ff;border-radius:7px;background:#fff"></div>
<div class="a" style="left:1954px;top:1385.0px;width:40px;color:#3266ff;font-size:17px;line-height:24px;text-align:center">1</div>
<div class="a" style="left:2003px;top:1385.0px;width:40px;color:#1f2229;font-size:17px;line-height:24px;text-align:center">2</div>
<div class="a" style="left:2053px;top:1385.0px;width:40px;color:#1f2229;font-size:17px;line-height:24px;text-align:center">3</div>
<div class="a" style="left:2103px;top:1385.0px;width:40px;color:#1f2229;font-size:17px;line-height:24px;text-align:center">4</div>
<div class="a" style="left:2153px;top:1385.0px;width:40px;color:#1f2229;font-size:17px;line-height:24px;text-align:center">5</div>
<div class="a" style="left:2254px;top:1385.0px;width:40px;color:#1f2229;font-size:17px;line-height:24px;text-align:center">13</div>
<svg class="i" style="left:2209px;top:1390px" width="30" height="10" viewBox="0 0 30 10"><circle cx="5" cy="5" r="2.5" fill="#c3cbe0"/><circle cx="14.6" cy="5" r="2.5" fill="#c3cbe0"/><circle cx="24.4" cy="5" r="2.5" fill="#c3cbe0"/></svg>
<svg class="i" style="left:2318px;top:1387.5px" width="12" height="16" viewBox="0 0 12 16"><path d="M2 1.5 L9.5 8 L2 14.5" fill="none" stroke="#1f2229" stroke-width="1.5"/></svg>
<div class="a" style="left:2364px;top:1374px;width:117px;height:40px;border:1px solid #cfd6e4;border-radius:8px;background:#fff"></div>
<div class="t" style="left:2379px;top:1385.0px;font-size:17px;color:#1f2229">10 条/页</div>
<svg class="i" style="left:2452px;top:1389px" width="8" height="14" viewBox="0 0 8 14"><path d="M1.5 1.5 L6.5 7 L1.5 12.5" fill="none" stroke="#b5bccc" stroke-width="1.4"/></svg>
<div class="t" style="left:2202px;top:1410px;font-size:26px;line-height:32px;color:rgba(120,120,120,.5)">激活 Windows</div>
<div class="t" style="left:2202px;top:1442px;font-size:18px;line-height:24px;color:rgba(120,120,120,.5)">转到“设置”以激活 Windows。</div>
<div class="a" style="left:2451px;top:1387px;width:50px;height:50px;border-radius:25px;background:#fff;box-shadow:0 4px 22px rgba(30,50,90,.11)"></div>
<svg class="i" style="left:2465px;top:1401px" width="22" height="22" viewBox="0 0 22 22"><circle cx="11" cy="11" r="9" fill="none" stroke="#4a5473" stroke-width="1.8"/><path d="M11 6 V11 L14 13.5" fill="none" stroke="#4a5473" stroke-width="1.8"/></svg>
<div class="a" style="left:290px;top:1484px;width:2221px;height:100px;background:#fff;border-radius:12px"></div>
<div class="t" style="left:320px;top:1507px;font-size:20px;line-height:26px;font-weight:bold;color:#141a2b">备份存储趋势</div>
<svg class="i" style="left:446px;top:1511px" width="19" height="19" viewBox="0 0 19 19"><circle cx="9.5" cy="9.5" r="8.5" fill="none" stroke="#5c6173" stroke-width="1.4"/><path d="M7 7.3 Q7 4.8 9.5 4.8 Q12 4.8 12 7.2 Q12 8.8 9.5 9.8 V11.5" fill="none" stroke="#5c6173" stroke-width="1.4"/><circle cx="9.5" cy="13.8" r="0.9" fill="#5c6173"/></svg>
<div class="a" style="left:1844px;top:1499px;width:637px;height:40px;border:1px solid #cfd6e4;border-radius:8px;background:#fff"></div>
<div class="a" style="left:1993px;top:1500px;width:1px;height:38px;background:#cfd6e4"></div>
<div class="t" style="left:1860px;top:1507px;font-size:17px;color:#1f2229">近 7 天</div>
<svg class="i" style="left:1966px;top:1514px" width="14" height="10" viewBox="0 0 14 10"><path d="M1 1.5 L7 8.5 L13 1.5" fill="none" stroke="#b5bccc" stroke-width="1.2"/></svg>
<div class="t" style="left:2013px;top:1507px;font-size:17px;color:#1f2229">2026年1月28日 11:07:24</div>
<div class="t" style="left:2256px;top:1507px;font-size:17px;color:#1f2229">2026年2月4日 11:07:24</div>
<svg class="i" style="left:2218px;top:1515px" width="16" height="8" viewBox="0 0 16 8"><path d="M0 6.5 H15 L10 1.5" fill="none" stroke="#c1c7d4" stroke-width="1.4"/></svg>
<svg class="i" style="left:2450px;top:1510px" width="16" height="17" viewBox="0 0 16 17"><rect x="1" y="3" width="14" height="13" fill="none" stroke="#c1c7d4" stroke-width="1.3"/><path d="M1 7 H15 M4.5 0.5 V4 M11.5 0.5 V4" stroke="#c1c7d4" stroke-width="1.3"/></svg>
</body></html>
